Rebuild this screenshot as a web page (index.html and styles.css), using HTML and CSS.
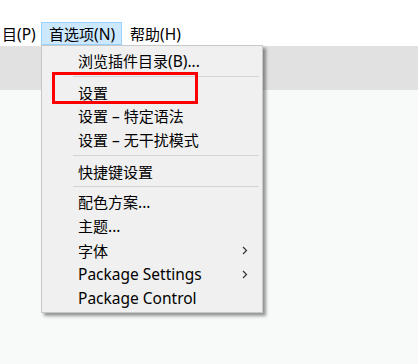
FILE: index.html
```html
<!DOCTYPE html>
<html lang="zh-CN">
<head>
    <meta charset="UTF-8">
    <meta name="viewport" content="width=device-width, initial-scale=1.0">
    <title>首选项</title>
    <link rel="stylesheet" href="styles.css">
</head>
<body>
    <div class="top"></div>
    <div class="menubar">
        <div class="mb-item first"><span>目<span class="lat">(P)</span></span></div>
        <div class="mb-item active"><span>首选项<span class="lat">(N)</span></span></div>
        <div class="mb-item"><span>帮助<span class="lat">(H)</span></span></div>
    </div>
    <div class="band"></div>
    <div class="work"></div>

    <div class="dropdown">
        <div class="item"><span>浏览插件目录<span class="lat">(B)...</span></span></div>
        <div class="sep"></div>
        <div class="item"><span>设置</span></div>
        <div class="item"><span>设置<span class="lat"> – </span>特定语法</span></div>
        <div class="item"><span>设置<span class="lat"> – </span>无干扰模式</span></div>
        <div class="sep"></div>
        <div class="item"><span>快捷键设置</span></div>
        <div class="sep"></div>
        <div class="item"><span>配色方案<span class="lat">...</span></span></div>
        <div class="item"><span>主题<span class="lat">...</span></span></div>
        <div class="item"><span>字体</span>
            <svg class="arrow" width="6" height="9" viewBox="0 0 6 9"><path d="M1 1 L4.5 4.5 L1 8" fill="none" stroke="#333" stroke-width="1.2"/></svg>
        </div>
        <div class="item"><span class="lat">Package Settings</span>
            <svg class="arrow" width="6" height="9" viewBox="0 0 6 9"><path d="M1 1 L4.5 4.5 L1 8" fill="none" stroke="#333" stroke-width="1.2"/></svg>
        </div>
        <div class="item"><span class="lat">Package Control</span></div>

        <!-- annotation box round 设置 -->
        <div class="mark"></div>
    </div>
</body>
</html>
```

FILE: styles.css
```css
body {
    margin: 0;
    font-family: "Noto Sans CJK SC", "Noto Sans", sans-serif;
    font-size: 15px;
    color: #000;
    background: #f8f9f9;
    width: 418px;
    height: 364px;
    overflow: hidden;
    position: relative;
}
.lat {
    font-family: "Noto Sans", "Noto Sans CJK SC", sans-serif;
    font-size: 15.5px;
    white-space: pre;
}
.top {
    height: 22px;
    background: #fff;
}
.menubar {
    display: flex;
    height: 24px;
    background: #fff;
}
.mb-item {
    box-sizing: border-box;
    height: 23px;
    padding: 0 7px;
    display: flex;
    align-items: center;
    border: 1px solid transparent;
    white-space: nowrap;
}
.mb-item.first {
    padding: 0 0 0 1px;
    width: 41px;
}
.mb-item.active {
    background: #cce8ff;
    border-color: #99d1ff;
    width: 81px;
}
.band {
    height: 44px;
    background: #e0e1e0;
}
.dropdown {
    position: absolute;
    left: 41px;
    top: 45px;
    width: 220px;
    padding: 3px 0 2px;
    background: #f0f0f0;
    border: 1px solid #c8c8c8;
    box-shadow: 3px 3px 3px rgba(0, 0, 0, 0.4);
}
.item {
    height: 24px;
    display: flex;
    align-items: center;
    padding-left: 36px;
    padding-right: 14px;
    white-space: nowrap;
}
.arrow {
    margin-left: auto;
}
.sep {
    height: 1px;
    background: #d4d4d4;
    margin: 3px 3px 3px 31px;
}
.mark {
    position: absolute;
    left: 10px;
    top: 26px;
    width: 140px;
    height: 26px;
    border: 3px solid #ff0000;
}
```
